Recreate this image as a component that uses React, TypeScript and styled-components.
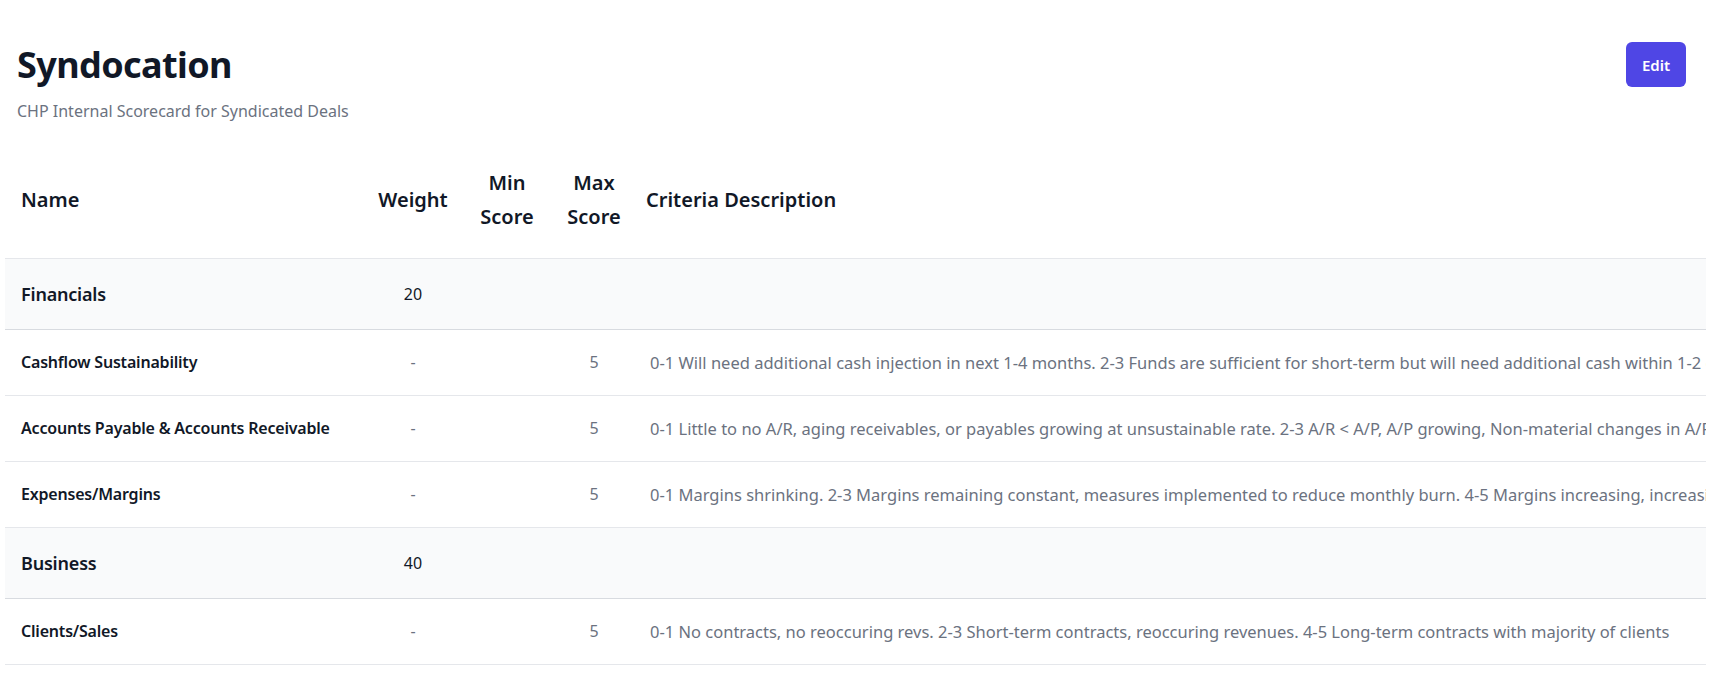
import React from "react";
import styled, { createGlobalStyle } from "styled-components";

const Global = createGlobalStyle`
  html, body { margin: 0; padding: 0; background: #fff; overflow: hidden; }
  body { font-family: "Noto Sans", "Open Sans", sans-serif; color: #111827; }
`;

const Page = styled.div`
  padding: 0 28px 0 5px;
`;

const Header = styled.header`
  display: flex;
  justify-content: space-between;
  align-items: flex-start;
  padding: 42px 20px 0 12px;
  height: 100px;
`;

const Title = styled.h1`
  margin: 0;
  font-size: 36px;
  font-weight: 700;
  line-height: 46px;
  letter-spacing: -0.6px;
  color: #111827;
`;

const Subtitle = styled.p`
  margin: 12px 0 0;
  font-size: 16px;
  color: #6b7280;
`;

const EditButton = styled.button`
  width: 60px;
  height: 45px;
  border: none;
  border-radius: 6px;
  background: #4f46e5;
  color: #fff;
  font-family: inherit;
  font-size: 15px;
  font-weight: 600;
`;

const arrow = `data:image/svg+xml;utf8,<svg xmlns='http://www.w3.org/2000/svg' width='19' height='19'><path d='M4 13 L9.5 7 L15 13 Z' fill='%23909090'/></svg>`;

const Scroll = styled.div`
  height: 547px;
  overflow-x: hidden;
  overflow-y: scroll;
  &::-webkit-scrollbar { width: 19px; background: #f8f8f8; }
  &::-webkit-scrollbar-track { background: #f8f8f8; }
  &::-webkit-scrollbar-thumb {
    background: #8c8c8c;
    border-radius: 8px;
    border: 4px solid #f8f8f8;
    border-top-width: 0;
    border-bottom-width: 0;
  }
  &::-webkit-scrollbar-button:single-button:vertical:decrement {
    display: block;
    height: 28px;
    background: #f8f8f8 url("${arrow}") no-repeat center 0;
  }
`;

const Table = styled.table`
  border-collapse: collapse;
  white-space: nowrap;
`;

const Th = styled.th<{ $w?: number; $align?: string }>`
  height: 116px;
  box-sizing: border-box;
  width: ${(p) => (p.$w ? `${p.$w}px` : "auto")};
  min-width: ${(p) => (p.$w ? `${p.$w}px` : "0")};
  text-align: ${(p) => p.$align || "center"};
  padding: 0 ${(p) => (p.$align === "left" ? "16px" : "0")};
  font-size: 20px;
  font-weight: 600;
  line-height: 34px;
  color: #111827;
  border-bottom: 1px solid #e5e7eb;
`;

const Row = styled.tr<{ $group?: boolean }>`
  height: ${(p) => (p.$group ? "71px" : "66px")};
  background: ${(p) => (p.$group ? "#f9fafb" : "#fff")};
  border-bottom: 1px solid ${(p) => (p.$group ? "#d8dbe0" : "#e5e7eb")};
`;

const NameCell = styled.td<{ $group?: boolean }>`
  padding: 0 16px;
  font-size: ${(p) => (p.$group ? "18px" : "16px")};
  font-weight: 600;
  letter-spacing: -0.2px;
  color: #111827;
`;

const NumCell = styled.td<{ $dark?: boolean }>`
  text-align: center;
  font-size: 16px;
  color: ${(p) => (p.$dark ? "#111827" : "#6b7280")};
`;

const DescCell = styled.td`
  padding-left: 20px;
  font-size: 16.5px;
  color: #6b7280;
`;

type Item = { name: string; group?: boolean; weight?: string; min?: string; max?: string; desc?: string };

const items: Item[] = [
  { name: "Financials", group: true, weight: "20" },
  { name: "Cashflow Sustainability", weight: "-", max: "5", desc: "0-1 Will need additional cash injection in next 1-4 months. 2-3 Funds are sufficient for short-term but will need additional cash within 1-2 quarters. 4-5 Sufficient funds" },
  { name: "Accounts Payable & Accounts Receivable", weight: "-", max: "5", desc: "0-1 Little to no A/R, aging receivables, or payables growing at unsustainable rate. 2-3 A/R < A/P, A/P growing, Non-material changes in A/R and A/P. 4-5 Healthy A/R" },
  { name: "Expenses/Margins", weight: "-", max: "5", desc: "0-1 Margins shrinking. 2-3 Margins remaining constant, measures implemented to reduce monthly burn. 4-5 Margins increasing, increasing efficiency" },
  { name: "Business", group: true, weight: "40" },
  { name: "Clients/Sales", weight: "-", max: "5", desc: "0-1 No contracts, no reoccuring revs. 2-3 Short-term contracts, reoccuring revenues. 4-5 Long-term contracts with majority of clients" },
  { name: "Market Opportunity", weight: "-", max: "5", desc: "0-1 Small or shrinking market. 2-3 Moderate market size. 4-5 Large and growing market" },
  { name: "Team", weight: "-", max: "5", desc: "0-1 Incomplete team. 2-3 Core team in place. 4-5 Experienced, complete team" },
];

export default function App() {
  return (
    <>
      <Global />
      <Page>
        <Header>
          <div>
            <Title>Syndocation</Title>
            <Subtitle>CHP Internal Scorecard for Syndicated Deals</Subtitle>
          </div>
          <EditButton>Edit</EditButton>
        </Header>
        <Scroll>
          <Table>
            <thead>
              <tr>
                <Th $w={365} $align="left">Name</Th>
                <Th $w={86}>Weight</Th>
                <Th $w={102}>Min<br />Score</Th>
                <Th $w={72}>Max<br />Score</Th>
                <Th $align="left">Criteria Description</Th>
              </tr>
            </thead>
            <tbody>
              {items.map((it) => (
                <Row key={it.name} $group={it.group}>
                  <NameCell $group={it.group}>{it.name}</NameCell>
                  <NumCell $dark={it.group}>{it.weight}</NumCell>
                  <NumCell>{it.min}</NumCell>
                  <NumCell>{it.max}</NumCell>
                  <DescCell>{it.desc}</DescCell>
                </Row>
              ))}
            </tbody>
          </Table>
        </Scroll>
      </Page>
    </>
  );
}
